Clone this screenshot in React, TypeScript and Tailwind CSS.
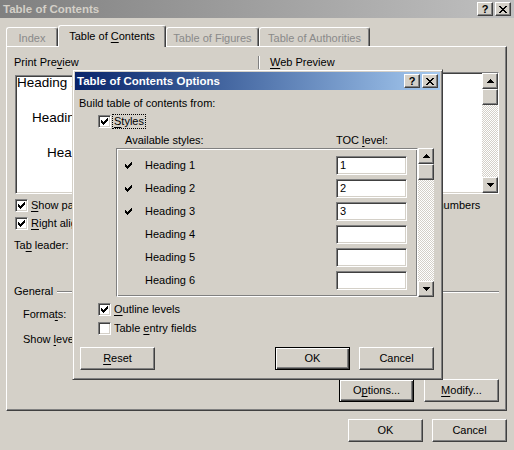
import React, { ReactNode } from 'react';

const raised =
  'border border-t-white border-l-white border-r-[#404040] border-b-[#404040] shadow-[inset_-1px_-1px_#808080] bg-[#d4d0c8]';
const sunken =
  'border border-t-[#808080] border-l-[#808080] border-r-white border-b-white shadow-[inset_1px_1px_#404040,inset_-1px_-1px_#d4d0c8]';
const etched =
  'border border-t-[#808080] border-l-[#808080] border-r-white border-b-white shadow-[inset_1px_1px_#fff,inset_-1px_-1px_#808080]';

function U({ children }: { children: ReactNode }) {
  return <span className="underline underline-offset-[2px]">{children}</span>;
}

function Tick() {
  return (
    <svg width="7" height="7" viewBox="0 0 7 7" shapeRendering="crispEdges">
      <path
        d="M6 0h1v1h-1z M5 1h2v1h-2z M0 2h1v1h-1z M4 2h3v1h-3z M0 3h2v1h-2z M3 3h3v1h-3z M0 4h5v1h-5z M1 5h3v1h-3z M2 6h1v1h-1z"
        fill="#000"
      />
    </svg>
  );
}

function Arrow({ down }: { down?: boolean }) {
  return (
    <svg width="7" height="4" viewBox="0 0 7 4" shapeRendering="crispEdges">
      <path
        d={
          down
            ? 'M0 0h7v1h-7z M1 1h5v1h-5z M2 2h3v1h-3z M3 3h1v1h-1z'
            : 'M3 0h1v1h-1z M2 1h3v1h-3z M1 2h5v1h-5z M0 3h7v1h-7z'
        }
        fill="#000"
      />
    </svg>
  );
}

function CloseGlyph() {
  return (
    <svg width="8" height="7" viewBox="0 0 8 7" shapeRendering="crispEdges">
      <path
        d="M0 0h2v1h-2z M6 0h2v1h-2z M1 1h2v1h-2z M5 1h2v1h-2z M2 2h4v1h-4z M3 3h2v1h-2z M2 4h4v1h-4z M1 5h2v1h-2z M5 5h2v1h-2z M0 6h2v1h-2z M6 6h2v1h-2z"
        fill="#000"
      />
    </svg>
  );
}

function CheckBox({ checked }: { checked?: boolean }) {
  return (
    <span className={`flex h-[13px] w-[13px] shrink-0 items-center justify-center bg-white ${sunken}`}>
      {checked && <Tick />}
    </span>
  );
}

function TitleButtons() {
  return (
    <div className="flex gap-[2px]">
      <div className={`flex h-[14px] w-[16px] items-center justify-center text-[11px] font-bold leading-none text-black ${raised}`}>
        ?
      </div>
      <div className={`flex h-[14px] w-[16px] items-center justify-center ${raised}`}>
        <CloseGlyph />
      </div>
    </div>
  );
}

function Button({ children, isDefault }: { children: ReactNode; isDefault?: boolean }) {
  const edge = isDefault
    ? 'border border-black bg-[#d4d0c8] shadow-[inset_1px_1px_#fff,inset_-1px_-1px_#404040,inset_-2px_-2px_#808080]'
    : raised;
  return (
    <div className={`flex h-[23px] w-[75px] items-center justify-center ${edge}`}>
      <span>{children}</span>
    </div>
  );
}

function ScrollBar() {
  return (
    <div className="flex h-full w-[16px] shrink-0 flex-col">
      <div className={`flex h-[16px] items-center justify-center ${raised}`}>
        <Arrow />
      </div>
      <div className={`h-[16px] ${raised}`} />
      <div className="flex-1 bg-[#d4d0c8] [background-image:repeating-conic-gradient(#fff_0_25%,transparent_0_50%)] [background-size:2px_2px]" />
      <div className={`flex h-[16px] items-center justify-center ${raised}`}>
        <Arrow down />
      </div>
    </div>
  );
}

function Tab({ label, active, width }: { label: ReactNode; active?: boolean; width: string }) {
  return (
    <div
      className={`flex items-center justify-center rounded-t-[3px] border-t border-l border-r border-t-white border-l-white border-r-[#404040] bg-[#d4d0c8] shadow-[inset_-1px_0_#808080] ${width} ${
        active ? 'relative z-10 -mb-[1px] h-[22px] text-black' : 'h-[19px] pt-[2px] text-[#8a8a8a]'
      }`}
    >
      <span>{label}</span>
    </div>
  );
}

const previewLines = [
  { label: 'Heading 1', page: '1', indent: 'pl-[1px]' },
  { label: 'Heading 2', page: '3', indent: 'pl-[16px]' },
  { label: 'Heading 3', page: '5', indent: 'pl-[31px]' },
];

const styleRows = [
  { name: 'Heading 1', level: '1' },
  { name: 'Heading 2', level: '2' },
  { name: 'Heading 3', level: '3' },
  { name: 'Heading 4', level: '' },
  { name: 'Heading 5', level: '' },
  { name: 'Heading 6', level: '' },
];

function OptionsDialog() {
  return (
    <div className="absolute left-[72px] top-[69px] flex h-[311px] w-[371px] flex-col border border-t-[#d4d0c8] border-l-[#d4d0c8] border-r-[#404040] border-b-[#404040] bg-[#d4d0c8] p-[2px] shadow-[inset_1px_1px_#fff,inset_-1px_-1px_#808080]">
      {/* title bar */}
      <div className="flex h-[18px] shrink-0 items-center justify-between bg-linear-to-r from-[#0a246a] to-[#a6caf0] pl-[2px] pr-[2px]">
        <span className="text-[11.5px] font-bold text-white">Table of Contents Options</span>
        <TitleButtons />
      </div>

      <div className="ml-[4px] mt-[7px]">Build table of contents from:</div>

      <div className="ml-[23px] mt-[5px] flex items-center">
        <CheckBox checked />
        <span className="-my-[1px] ml-[1px] border border-dotted border-black px-[1px]">
          <U>S</U>tyles
        </span>
      </div>

      <div className="ml-[50px] mt-[6px] flex">
        <span className="w-[211px]">Available styles:</span>
        <span>
          TOC <U>l</U>evel:
        </span>
      </div>

      <div className="ml-[41px] mt-[1px] flex h-[149px]">
        <div className={`h-full w-[302px] bg-[#d4d0c8] pt-[5px] ${etched}`}>
          {styleRows.map((r) => (
            <div key={r.name} className="flex h-[23px] items-center">
              <span className="ml-[8px] flex w-[7px] items-center">{r.level && <Tick />}</span>
              <span className="ml-[13px] w-[191px]">{r.name}</span>
              <div className={`flex h-[19px] w-[71px] items-center bg-white pl-[3px] ${sunken}`}>{r.level}</div>
            </div>
          ))}
        </div>
        <ScrollBar />
      </div>

      <div className="ml-[23px] mt-[6px] flex items-center gap-[3px]">
        <CheckBox checked />
        <span>
          <U>O</U>utline levels
        </span>
      </div>
      <div className="ml-[23px] mt-[6px] flex items-center gap-[3px]">
        <CheckBox />
        <span>
          Table <U>e</U>ntry fields
        </span>
      </div>

      <div className="mt-[12px] flex pl-[5px] pr-[6px]">
        <Button>
          <U>R</U>eset
        </Button>
        <div className="flex-1" />
        <div className="flex gap-[9px]">
          <Button isDefault>OK</Button>
          <Button>Cancel</Button>
        </div>
      </div>
    </div>
  );
}

export default function App() {
  return (
    <div className="relative h-[450px] w-[514px] overflow-hidden bg-[#d4d0c8] font-['Liberation_Sans',Arial,sans-serif] text-[11px] leading-[13px] text-black">
      {/* inactive title bar */}
      <div className="flex h-[18px] items-center justify-between bg-linear-to-r from-[#808080] to-[#c0c0c0] pl-[3px] pr-[3px]">
        <span className="text-[11.5px] font-bold text-[#d4d0c8]">Table of Contents</span>
        <TitleButtons />
      </div>

      {/* tabs */}
      <div className="mt-[7px] flex h-[21px] items-end pl-[6px]">
        <Tab label="Index" width="w-[52px]" />
        <Tab
          active
          width="w-[108px]"
          label={
            <>
              Table of <U>C</U>ontents
            </>
          }
        />
        <Tab label="Table of Figures" width="w-[93px]" />
        <Tab label="Table of Authorities" width="w-[111px]" />
      </div>

      {/* tab page */}
      <div className={`ml-[6px] flex h-[365px] w-[501px] flex-col ${raised}`}>
        <div className="mt-[9px] flex h-[229px]">
          <div className="w-[251px] pl-[7px]">
            <div>
              Print Pre<U>v</U>iew
            </div>
            <div className={`ml-[1px] mt-[6px] h-[119px] w-[236px] overflow-hidden bg-white ${sunken}`}>
              <div className="-mt-[1px] flex flex-col gap-[20px] pr-[8px] text-[13.5px] leading-[15px]">
                {previewLines.map((l) => (
                  <div key={l.label} className={`flex items-end ${l.indent}`}>
                    <span>{l.label}</span>
                    <span className="mx-[2px] mb-[3px] flex-1 border-b border-dotted border-black" />
                    <span>{l.page}</span>
                  </div>
                ))}
              </div>
            </div>
            <div className="ml-[1px] mt-[5px] flex items-center gap-[3px]">
              <CheckBox checked />
              <span>
                <U>S</U>how page numbers
              </span>
            </div>
            <div className="ml-[1px] mt-[5px] flex items-center gap-[3px]">
              <CheckBox checked />
              <span>
                <U>R</U>ight align page numbers
              </span>
            </div>
            <div className="mt-[5px] flex h-[21px] items-center">
              <span className="w-[100px]">
                Ta<U>b</U> leader:
              </span>
              <div className={`flex h-[21px] w-[120px] items-center bg-white pl-[3px] ${sunken}`}>.......</div>
            </div>
          </div>

          <div className="h-[200px] w-[2px] border-l border-r border-l-[#808080] border-r-white" />

          <div className="flex-1 pl-[8px]">
            <div className="pl-[2px]">
              <U>W</U>eb Preview
            </div>
            <div className={`mt-[3px] flex h-[122px] w-[231px] bg-white ${sunken}`}>
              <div className="flex-1" />
              <ScrollBar />
            </div>
            <div className="mt-[5px] flex items-center gap-[3px]">
              <CheckBox checked />
              <span>
                Use <U>h</U>yperlinks instead of page numbers
              </span>
            </div>
          </div>
        </div>

        {/* General group */}
        <div className="flex items-center pl-[7px] pr-[7px]">
          <span>General</span>
          <div className="ml-[4px] h-[2px] flex-1 border-t border-b border-t-[#808080] border-b-white" />
        </div>
        <div className="mt-[6px] flex h-[21px] items-center pl-[16px]">
          <span>
            Forma<U>t</U>s:
          </span>
        </div>
        <div className="mt-[4px] flex h-[21px] items-center pl-[16px]">
          <span>
            Show <U>l</U>evels:
          </span>
        </div>
        <div className="mt-[29px] flex justify-end gap-[10px] pr-[7px]">
          <Button isDefault>
            O<U>p</U>tions...
          </Button>
          <Button>
            <U>M</U>odify...
          </Button>
        </div>
      </div>

      <div className="mt-[8px] flex justify-end gap-[9px] pr-[7px]">
        <Button>OK</Button>
        <Button>Cancel</Button>
      </div>

      <OptionsDialog />
    </div>
  );
}
